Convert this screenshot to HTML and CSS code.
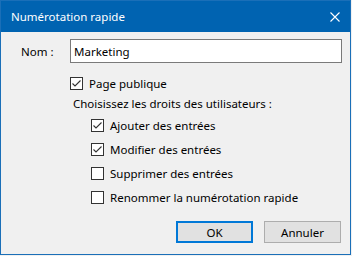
FILE: index.html
```html
<!DOCTYPE html>
<html lang="fr">
<head>
    <meta charset="UTF-8">
    <title>Numérotation rapide</title>
    <link rel="stylesheet" href="styles.css">
</head>
<body>
    <div class="window">
        <div class="titlebar">
            <span class="title">Numérotation rapide</span>
            <svg class="close" width="10" height="10" viewBox="0 0 10 10">
                <path d="M0.5 0.5 L9.5 9.5 M9.5 0.5 L0.5 9.5" stroke="#fff" stroke-width="1.1" fill="none"/>
            </svg>
        </div>
        <div class="content">
            <div class="name-row">
                <label class="name-label">Nom :</label>
                <input type="text" class="name-input" value="Marketing">
            </div>
            <label class="check page-check">
                <span class="box"><svg viewBox="0 0 11 11" width="11" height="11"><path d="M1.5 5.5 L4 8 L9.5 2.5" stroke="#333" stroke-width="1.1" fill="none"/></svg></span>Page publique
            </label>
            <div class="rights-label">Choisissez les droits des utilisateurs :</div>
            <label class="check sub">
                <span class="box"><svg viewBox="0 0 11 11" width="11" height="11"><path d="M1.5 5.5 L4 8 L9.5 2.5" stroke="#333" stroke-width="1.1" fill="none"/></svg></span>Ajouter des entrées
            </label>
            <label class="check sub">
                <span class="box"><svg viewBox="0 0 11 11" width="11" height="11"><path d="M1.5 5.5 L4 8 L9.5 2.5" stroke="#333" stroke-width="1.1" fill="none"/></svg></span>Modifier des entrées
            </label>
            <label class="check sub"><span class="box"></span>Supprimer des entrées</label>
            <label class="check sub"><span class="box"></span>Renommer la numérotation rapide</label>
            <div class="buttons">
                <button class="btn default">OK</button>
                <button class="btn">Annuler</button>
            </div>
        </div>
    </div>
</body>
</html>
```

FILE: styles.css
```css
body {
    margin: 0;
    background: #f0f0f0;
    font-family: "Noto Sans", sans-serif;
    font-size: 11.5px;
    color: #000;
}
.window {
    width: 351px;
    height: 255px;
    box-sizing: border-box;
    border: 1px solid #1a6fb8;
    background: #f0f0f0;
}
.titlebar {
    height: 31px;
    background: #0063b1;
    display: flex;
    align-items: center;
    justify-content: space-between;
    padding: 0 10px;
    color: #fff;
}
.content {
    padding: 7px 7px 0 20px;
}
.name-row {
    display: flex;
    align-items: center;
}
.name-label {
    width: 49px;
}
.name-input {
    width: 272px;
    height: 24px;
    box-sizing: border-box;
    border: 1px solid #7a7a7a;
    background: #fff;
    padding: 0 3px;
    font-family: inherit;
    font-size: 11.5px;
    margin: 0;
    outline: none;
}
.check {
    display: flex;
    align-items: center;
    height: 24px;
    gap: 6px;
}
.page-check {
    margin-top: 8px;
    margin-left: 49px;
}
.sub {
    margin-left: 70px;
}
.rights-label {
    height: 18px;
    line-height: 18px;
    margin-left: 52px;
}
.box {
    width: 13px;
    height: 13px;
    box-sizing: border-box;
    border: 1px solid #333;
    background: #fff;
    display: flex;
}
.buttons {
    display: flex;
    justify-content: flex-end;
    gap: 11px;
    margin-top: 12px;
    padding-right: 2px;
}
.btn {
    width: 77px;
    height: 22px;
    box-sizing: border-box;
    border: 1px solid #adadad;
    background: #e1e1e1;
    font-family: inherit;
    font-size: 11.5px;
    color: #000;
    padding: 0;
}
.btn.default {
    border: 2px solid #0078d7;
}
```
